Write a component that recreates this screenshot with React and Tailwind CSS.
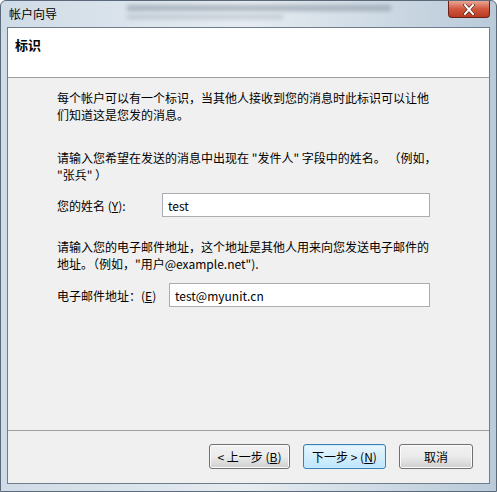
import React from "react";

const font = { fontFamily: '"Noto Sans CJK SC", "Liberation Sans", sans-serif' };

const Btn = ({ children, primary, w }) => (
  <button
    className={
      primary
        ? "h-[25px] rounded-[3px] border border-[#3c7fb1] bg-gradient-to-b from-[#eaf6fd] to-[#bee6fd] text-[12px] text-black shadow-[inset_0_0_0_1px_#c8ecfd]"
        : "h-[25px] rounded-[3px] border border-[#707070] bg-gradient-to-b from-[#f2f2f2] via-[#ebebeb] to-[#cfcfcf] text-[12px] text-black shadow-[inset_0_0_0_1px_#fbfbfb]"
    }
    style={{ width: w }}
  >
    {children}
  </button>
);

export default function App() {
  return (
    <div
      className="w-[497px] h-[492px] flex flex-col rounded-t-[6px] border border-[#5a6a7a] bg-gradient-to-r from-[#cfdbe6] via-[#e6ecf1] to-[#b9cad9] overflow-hidden"
      style={font}
    >
      {/* title bar */}
      <div className="h-[26px] flex items-start">
        <div className="pl-[8px] pt-[4px] text-[12px] text-black">帐户向导</div>
        {/* blurred glass behind the title */}
        <div className="flex-1 ml-[70px] mr-[10px] mt-[4px] h-[18px] flex flex-col gap-[4px] blur-[2px] opacity-60">
          <div className="h-[6px] w-[85%] bg-[#8a96a2]" />
          <div className="h-[4px] w-[50%] bg-[#a7b2bd]" />
        </div>
        <div className="mr-[6px] h-[17px] w-[42px] rounded-b-[4px] border border-t-0 border-[#6b2018] bg-gradient-to-b from-[#e8a593] via-[#d0573f] to-[#b83a22] flex items-center justify-center">
          <svg width="12" height="11" viewBox="0 0 12 11">
            <path d="M2 1 L10 10 M10 1 L2 10" stroke="#4a1a12" strokeWidth="3.2" strokeLinecap="square" />
            <path d="M2 1 L10 10 M10 1 L2 10" stroke="#ffffff" strokeWidth="2" strokeLinecap="square" />
          </svg>
        </div>
      </div>

      {/* client area */}
      <div className="mx-[6px] h-[457px] border border-[#6d7d8c] bg-[#f0f0f0] flex flex-col text-[12px] text-black">
        <div className="h-[50px] bg-white border-b border-[#a0a0a0] pl-[7px] pt-[7px] font-bold text-[13px]">
          标识
        </div>

        <div className="flex-1 pl-[49px] pr-[59px] pt-[11px] leading-[17px] whitespace-nowrap">
          <p>
            每个帐户可以有一个标识，当其他人接收到您的消息时此标识可以让他
            <br />
            们知道这是您发的消息。
          </p>

          <p className="mt-[26px]">
            请输入您希望在发送的消息中出现在 "发件人" 字段中的姓名。 （例如，
            <br />
            "张兵" ）
          </p>

          <div className="mt-[10px] flex items-center">
            <span className="w-[105px]">
              您的姓名 (<span className="underline">Y</span>):
            </span>
            <div className="h-[24px] flex-1 border border-[#abadb3] bg-white pl-[5px] flex items-center">test</div>
          </div>

          <p className="mt-[21px]">
            请输入您的电子邮件地址，这个地址是其他人用来向您发送电子邮件的
            <br />
            地址。（例如，"用户@example.net").
          </p>

          <div className="mt-[11px] flex items-center">
            <span className="w-[112px]">
              电子邮件地址：(<span className="underline">E</span>)
            </span>
            <div className="h-[24px] flex-1 border border-[#abadb3] bg-white pl-[5px] flex items-center">test@myunit.cn</div>
          </div>
        </div>

        <div className="h-[53px] border-t border-[#a0a0a0] flex items-center justify-end gap-[13px] pr-[16px] pb-[1px]">
          <Btn w="81px">
            &lt; 上一步 (<span className="underline">B</span>)
          </Btn>
          <Btn primary w="83px">
            下一步 &gt; (<span className="underline">N</span>)
          </Btn>
          <Btn w="74px">取消</Btn>
        </div>
      </div>
    </div>
  );
}
